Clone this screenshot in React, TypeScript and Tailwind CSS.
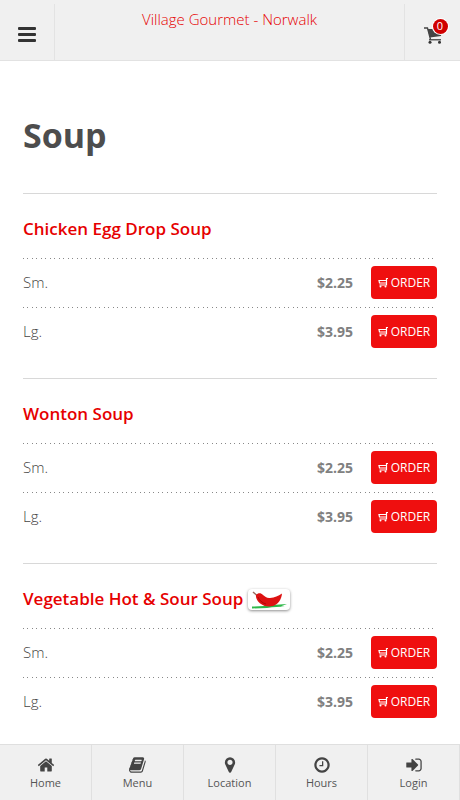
import type { ReactNode } from 'react'

type MenuItem = {
  name: string
  spicy?: boolean
  sizes: { label: string; price: string }[]
}

const items: MenuItem[] = [
  {
    name: 'Chicken Egg Drop Soup',
    sizes: [
      { label: 'Sm.', price: '$2.25' },
      { label: 'Lg.', price: '$3.95' },
    ],
  },
  {
    name: 'Wonton Soup',
    sizes: [
      { label: 'Sm.', price: '$2.25' },
      { label: 'Lg.', price: '$3.95' },
    ],
  },
  {
    name: 'Vegetable Hot & Sour Soup',
    spicy: true,
    sizes: [
      { label: 'Sm.', price: '$2.25' },
      { label: 'Lg.', price: '$3.95' },
    ],
  },
]

const tabs = [
  {
    label: 'Home',
    path: 'M1472 992v480q0 26-19 45t-45 19h-384v-384h-256v384h-384q-26 0-45-19t-19-45v-480q0-1 .5-3t.5-3l575-474 575 474q1 2 1 6zm223-69l-62 74q-8 9-21 11h-3q-13 0-21-7l-692-577-692 577q-12 8-24 7-13-2-21-11l-62-74q-8-10-7-23.5t11-21.5l719-599q32-26 76-26t76 26l244 204v-195q0-14 9-23t23-9h192q14 0 23 9t9 23v408l219 182q10 8 11 21.5t-7 23.5z',
  },
  {
    label: 'Menu',
    path: 'M1639 478q40 57 18 129l-275 906q-19 64-76.5 107.5t-122.5 43.5h-923q-77 0-148.5-53.5t-99.5-131.5q-24-67-2-127 0-4 3-27t4-37q1-8-3-21.5t-3-19.5q2-11 8-21t16.5-23.5 16.5-23.5q23-38 45-91.5t30-91.5q3-10 .5-30t-.5-28q3-11 17-28t17-23q21-36 42-92t25-90q1-9-2.5-32t.5-28q4-13 22-30.5t22-22.5q19-26 42.5-84.5t27.5-96.5q1-8-3-25.5t-2-26.5q2-8 9-18t18-23 17-21q8-12 16.5-30.5t15-35 16-36 19.5-32 26.5-23.5 36-11.5 47.5 5.5l-1 3q38-9 51-9h761q74 0 114 56t18 130l-274 906q-36 119-71.5 153.5t-128.5 34.5h-869q-27 0-38 15-11 16-1 43 24 70 144 70h923q29 0 56-15.5t35-41.5l300-987q7-22 5-57 38 15 59 43zm-1064 2q-4 13 2 22.5t20 9.5h608q13 0 25.5-9.5t16.5-22.5l21-64q4-13-2-22.5t-20-9.5h-608q-13 0-25.5 9.5t-16.5 22.5zm-83 256q-4 13 2 22.5t20 9.5h608q13 0 25.5-9.5t16.5-22.5l21-64q4-13-2-22.5t-20-9.5h-608q-13 0-25.5 9.5t-16.5 22.5z',
  },
  {
    label: 'Location',
    path: 'M1152 640q0-106-75-181t-181-75-181 75-75 181 75 181 181 75 181-75 75-181zm256 0q0 109-33 179l-364 774q-16 33-47.5 52t-67.5 19-67.5-19-46.5-52l-365-774q-33-70-33-179 0-212 150-362t362-150 362 150 150 362z',
  },
  {
    label: 'Hours',
    path: 'M1024 544v448q0 14-9 23t-23 9h-320q-14 0-23-9t-9-23v-64q0-14 9-23t23-9h224v-352q0-14 9-23t23-9h64q14 0 23 9t9 23zm416 352q0-148-73-273t-198-198-273-73-273 73-198 198-73 273 73 273 198 198 273 73 273-73 198-198 73-273zm224 0q0 209-103 385.5t-279.5 279.5-385.5 103-385.5-103-279.5-279.5-103-385.5 103-385.5 279.5-279.5 385.5-103 385.5 103 279.5 279.5 103 385.5z',
  },
  {
    label: 'Login',
    path: 'M1312 896q0 26-19 45l-544 544q-19 19-45 19t-45-19-19-45v-288h-448q-26 0-45-19t-19-45v-384q0-26 19-45t45-19h448v-288q0-26 19-45t45-19 45 19l544 544q19 19 19 45zm352-352v704q0 119-84.5 203.5t-203.5 84.5h-320q-13 0-22.5-9.5t-9.5-22.5q0-4-1-20t-.5-26.5 3-23.5 10-19.5 20.5-6.5h320q66 0 113-47t47-113v-704q0-66-47-113t-113-47h-312l-11.5-1-11.5-3-8-5.5-7-9-2-13.5q0-4-1-20t-.5-26.5 3-23.5 10-19.5 20.5-6.5h320q119 0 203.5 84.5t84.5 203.5z',
  },
]

function Chili() {
  return (
    <span className="flex h-[21px] w-[42px] items-center justify-center rounded bg-white shadow-[0_1px_3px_rgba(0,0,0,0.45)]">
      <svg viewBox="0 0 42 21" className="h-[21px] w-[42px]" role="img" aria-label="Spicy">
        <path d="M4 17.5c8 0 14-.5 20-1.500l15-1-6 2.200 4 .3-13 .8-5 .7-15 .5z" fill="#2fb84a" />
        <path d="M5 3l4 3.500" stroke="#9a6a60" strokeWidth="1.500" />
        <path
          d="M8 6c2-2.200 5-2.200 7 0 2 1.500 4 3.500 7 3 5-.5 8-2 12-4.500-.5 6-4 11-9 12.500-4 1-9 .5-12-2-3-2-5.500-5.500-5-9z"
          fill="#dd1212"
        />
        <path d="M10 8c1 3 4 6 8 7" fill="none" stroke="#b00808" strokeWidth="1" />
      </svg>
    </span>
  )
}

function OrderButton() {
  return (
    <button
      type="button"
      className="flex h-[33px] w-[66px] cursor-pointer items-center justify-center gap-[3px] rounded bg-[#ef0f0f] text-xs text-white"
    >
      <svg viewBox="0 0 10 11" className="h-[11px] w-2.5" fill="none" stroke="currentColor" aria-hidden>
        <path d="M10 1.500H8.500V8H1.500M8.500 3.500H1L1.500 6H8.500" strokeWidth="1.200" />
        <circle cx="2.500" cy="9.500" r="1" fill="currentColor" stroke="none" />
        <circle cx="7.500" cy="9.500" r="1" fill="currentColor" stroke="none" />
      </svg>
      ORDER
    </button>
  )
}

function Section({ title, children }: { title: ReactNode; children: ReactNode }) {
  return (
    <section className="border-t border-[#d8d8d8] pt-[23px] pb-[22px] last:pb-2">
      <h2 className="mb-[17px] flex h-6 items-center gap-[5px] text-[17px] font-semibold text-[#e60000]">{title}</h2>
      {children}
    </section>
  )
}

export default function App() {
  return (
    <div className="flex min-h-screen flex-col bg-white font-['Open_Sans',sans-serif] text-[#4d4d4d]">
      <header className="flex h-[61px] border-b border-[#e2e2e2] bg-[#f0f0f0]">
        <button
          type="button"
          aria-label="Open menu"
          className="mt-1 flex w-[55px] cursor-pointer items-center justify-center border-r border-[#e3e3e3] pt-1"
        >
          <svg viewBox="0 0 18 16" className="h-4 w-[18px] fill-[#333]" aria-hidden>
            <rect y="1" width="18" height="3" rx="1" />
            <rect y="7" width="18" height="3" rx="1" />
            <rect y="13" width="18" height="3" rx="1" />
          </svg>
        </button>
        <a href="#" className="flex-1 pt-[9px] text-center text-[15px] leading-5 font-light text-[#e60000]">
          Village Gourmet - Norwalk
        </a>
        <button
          type="button"
          aria-label="Cart, 0 items"
          className="mt-1 flex w-14 cursor-pointer items-center justify-center border-l border-[#e3e3e3] pt-1.5"
        >
          <span className="relative">
            <svg viewBox="0 0 18 17" className="h-[17px] w-[18px]" aria-hidden>
              <path d="M0 1h3.500l3 11.500" fill="none" stroke="#444" strokeWidth="1.300" />
              <path d="M3.500 2h14.500l-1 7-11 1.500z" fill="#444" />
              <path d="M5 12.800h12" stroke="#333" strokeWidth="1.200" />
              <circle cx="6" cy="15.300" r="1.500" fill="#333" />
              <circle cx="15.500" cy="15.300" r="1.500" fill="#333" />
            </svg>
            <span className="absolute -top-2 -right-1.5 flex size-[15px] items-center justify-center rounded-full bg-[#d00000] text-[11px] text-white ring-1 ring-white">
              0
            </span>
          </span>
        </button>
      </header>

      <main className="flex-1 px-[23px] pt-[49px]">
        <h1 className="mb-[33px] text-[34px] leading-[50px] font-bold text-[#4d4d4d]">Soup</h1>
        {items.map((item) => (
          <Section
            key={item.name}
            title={
              <>
                {item.name}
                {item.spicy && <Chili />}
              </>
            }
          >
            <table className="w-full border-collapse">
              <tbody>
                {item.sizes.map((size) => (
                  <tr
                    key={size.label}
                    className="h-[49px] bg-[repeating-linear-gradient(90deg,#888_0_1px,transparent_1px_4px,#888_4px_5px,transparent_5px_9px)] bg-[length:100%_1px] bg-no-repeat"
                  >
                    <th scope="row" className="text-left text-[15px] font-light text-[#444]">
                      {size.label}
                    </th>
                    <td className="text-right text-sm font-bold text-[#808080]">{size.price}</td>
                    <td className="w-[84px] pl-[18px]">
                      <OrderButton />
                    </td>
                  </tr>
                ))}
              </tbody>
            </table>
          </Section>
        ))}
      </main>

      <nav className="sticky bottom-0 grid h-14 grid-cols-5 border-t border-[#dfdfdf] bg-[#f0f0f0]">
        {tabs.map((tab) => (
          <a
            key={tab.label}
            href="#"
            className="flex flex-col items-center gap-px border-r border-[#e0e0e0] pt-[11px] text-[11px] leading-4 text-[#555]"
          >
            <svg viewBox="0 0 1792 1792" className="size-[18px] fill-[#444]" aria-hidden>
              <path d={tab.path} />
            </svg>
            {tab.label}
          </a>
        ))}
      </nav>
    </div>
  )
}
